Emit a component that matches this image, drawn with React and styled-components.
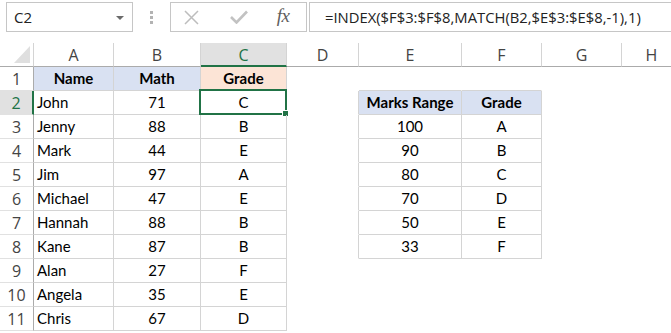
import React from "react";
import styled, { createGlobalStyle } from "styled-components";

const Global = createGlobalStyle`
  html, body { margin: 0; padding: 0; background: #ffffff; }
  body { width: 671px; height: 333px; overflow: hidden; }
`;

const Page = styled.div`
  display: flex;
  flex-direction: column;
  width: 671px;
`;

const FormulaBar = styled.div`
  display: flex;
  align-items: stretch;
  height: 30px;
  margin-top: 2px;
  padding-left: 6px;
`;

const Box = styled.div`
  box-sizing: border-box;
  border: 1px solid #c6c6c6;
  background: #fff;
  height: 30px;
`;

const NameBox = styled(Box)`
  width: 127px;
  display: flex;
  align-items: center;
  justify-content: space-between;
  padding: 0 8px 0 7px;
  font-family: "Open Sans", "Noto Sans", sans-serif;
  font-size: 15px;
  color: #222;
`;

const Caret = styled.span`
  width: 0;
  height: 0;
  border-left: 4px solid transparent;
  border-right: 4px solid transparent;
  border-top: 4px solid #6a6a6a;
  margin-top: 1px;
`;

const Grip = styled.div`
  width: 37px;
  display: flex;
  flex-direction: column;
  align-items: center;
  justify-content: center;
  gap: 2px;
`;

const GripDot = styled.span`
  width: 3px;
  height: 3px;
  background: #b3b3b3;
`;

const FxBox = styled(Box)`
  width: 137px;
  display: grid;
  grid-template-columns: 40px 56px 32px;
  align-items: center;
  justify-items: center;
`;

const FxText = styled.span`
  font-family: "Liberation Serif", "DejaVu Serif", serif;
  font-style: italic;
  font-size: 19px;
  color: #5e5e5e;
  letter-spacing: -0.5px;
  margin-top: -2px;
`;

const FormulaInput = styled(Box)`
  flex: 1;
  margin-left: 2px;
  border-right: none;
  display: flex;
  align-items: center;
  padding-left: 15px;
  font-family: "Open Sans", "Noto Sans", sans-serif;
  font-size: 14.8px;
  color: #222;
  white-space: nowrap;
  overflow: hidden;
`;

const Sheet = styled.div`
  display: grid;
  grid-template-columns: 34px 80px 87px 86px 72px 103px 80px 80px 60px;
  grid-auto-rows: 24px;
  margin-top: 11px;
`;

const ColHead = styled.div`
  box-sizing: border-box;
  border-bottom: ${(p) => (p.$sel ? "2px solid #217346" : "1px solid #ababab")};
  border-right: 1px solid ${(p) => (p.$last ? "transparent" : "#d4d4d4")};
  background: ${(p) => (p.$sel ? "#e1e1e1" : "#ffffff")};
  color: ${(p) => (p.$sel ? "#217346" : "#444444")};
  font-family: "Open Sans", "Noto Sans", sans-serif;
  font-size: 16px;
  display: flex;
  align-items: center;
  justify-content: center;
  padding-top: 1px;
`;

const Corner = styled.div`
  box-sizing: border-box;
  border-bottom: 1px solid #ababab;
  border-right: 1px solid #d4d4d4;
  display: flex;
  align-items: flex-end;
  justify-content: flex-end;
  padding: 0 3px 3px 0;
`;

const CornerTri = styled.span`
  width: 0;
  height: 0;
  border-left: 16px solid transparent;
  border-bottom: 17px solid #dfdfdf;
`;

const RowHead = styled.div`
  box-sizing: border-box;
  border-right: ${(p) => (p.$sel ? "2px solid #217346" : "1px solid #ababab")};
  border-bottom: 1px solid #e1e1e1;
  background: ${(p) => (p.$sel ? "#e1e1e1" : "#ffffff")};
  color: ${(p) => (p.$sel ? "#217346" : "#444444")};
  font-family: "Open Sans", "Noto Sans", sans-serif;
  font-size: 16px;
  display: flex;
  align-items: center;
  justify-content: center;
  padding-top: 1px;
`;

const Cell = styled.div`
  position: relative;
  box-sizing: border-box;
  border-right: 1px solid ${(p) => (p.$r ? "#d4d4d4" : "transparent")};
  border-bottom: 1px solid ${(p) => (p.$b ? "#d4d4d4" : "transparent")};
  background: ${(p) => p.$bg || "transparent"};
  font-family: Lato, "Noto Sans", sans-serif;
  font-size: 15px;
  font-weight: ${(p) => (p.$bold ? 700 : 400)};
  color: #000;
  line-height: 23px;
  text-align: ${(p) => (p.$left ? "left" : "center")};
  padding-left: ${(p) => (p.$left ? "3px" : "0")};
  white-space: nowrap;
`;

const Selection = styled.div`
  position: absolute;
  left: -2px;
  top: -2px;
  right: -1px;
  bottom: -1px;
  border: 2px solid #217346;
  pointer-events: none;
`;

const Handle = styled.div`
  position: absolute;
  right: -4px;
  bottom: -4px;
  width: 5px;
  height: 5px;
  background: #217346;
  border: 1px solid #fff;
`;

const students = [
  ["John", 71, "C"],
  ["Jenny", 88, "B"],
  ["Mark", 44, "E"],
  ["Jim", 97, "A"],
  ["Michael", 47, "E"],
  ["Hannah", 88, "B"],
  ["Kane", 87, "B"],
  ["Alan", 27, "F"],
  ["Angela", 35, "E"],
  ["Chris", 67, "D"],
];

const ranges = [
  [100, "A"],
  [90, "B"],
  [80, "C"],
  [70, "D"],
  [50, "E"],
  [33, "F"],
];

const cols = ["A", "B", "C", "D", "E", "F", "G", "H"];

function XIcon() {
  return (
    <svg width="15" height="15" viewBox="0 0 15 15">
      <path d="M1 1 L14 14 M14 1 L1 14" stroke="#bdbdbd" strokeWidth="1.5" fill="none" />
    </svg>
  );
}

function CheckIcon() {
  return (
    <svg width="18" height="14" viewBox="0 0 18 14">
      <path d="M1 7 L6.5 12.5 L17 1.5" stroke="#c2c2c2" strokeWidth="2.6" fill="none" />
    </svg>
  );
}

export default function App() {
  const rows = [];
  for (let r = 1; r <= 11; r++) {
    const cells = [];
    if (r === 1) {
      cells.push(
        <Cell key="A" $r $b $bold $bg="#d9e1f2">Name</Cell>,
        <Cell key="B" $r $b $bold $bg="#d9e1f2">Math</Cell>,
        <Cell key="C" $r $b $bold $bg="#fce4d6">Grade</Cell>
      );
    } else {
      const s = students[r - 2];
      cells.push(
        <Cell key="A" $r $b $left>{s[0]}</Cell>,
        <Cell key="B" $r $b>{s[1]}</Cell>,
        <Cell key="C" $r $b>
          {s[2]}
          {r === 2 && (
            <Selection>
              <Handle />
            </Selection>
          )}
        </Cell>
      );
    }
    const inTable = r >= 2 && r <= 8;
    cells.push(<Cell key="D" $r={inTable} />);
    if (r === 1) {
      cells.push(<Cell key="E" $b />, <Cell key="F" $b />);
    } else if (r === 2) {
      cells.push(
        <Cell key="E" $r $b $bold $bg="#d9e1f2">Marks Range</Cell>,
        <Cell key="F" $r $b $bold $bg="#d9e1f2">Grade</Cell>
      );
    } else if (inTable) {
      const t = ranges[r - 3];
      cells.push(
        <Cell key="E" $r $b>{t[0]}</Cell>,
        <Cell key="F" $r $b>{t[1]}</Cell>
      );
    } else {
      cells.push(<Cell key="E" />, <Cell key="F" />);
    }
    cells.push(<Cell key="G" />, <Cell key="H" />);
    rows.push(
      <React.Fragment key={r}>
        <RowHead $sel={r === 2}>{r}</RowHead>
        {cells}
      </React.Fragment>
    );
  }

  return (
    <Page>
      <Global />
      <FormulaBar>
        <NameBox>
          <span>C2</span>
          <Caret />
        </NameBox>
        <Grip>
          <GripDot />
          <GripDot />
          <GripDot />
        </Grip>
        <FxBox>
          <XIcon />
          <CheckIcon />
          <FxText>fx</FxText>
        </FxBox>
        <FormulaInput>=INDEX($F$3:$F$8,MATCH(B2,$E$3:$E$8,-1),1)</FormulaInput>
      </FormulaBar>
      <Sheet>
        <Corner>
          <CornerTri />
        </Corner>
        {cols.map((c, i) => (
          <ColHead key={c} $sel={c === "C"} $last={i === cols.length - 1}>
            {c}
          </ColHead>
        ))}
        {rows}
      </Sheet>
    </Page>
  );
}
